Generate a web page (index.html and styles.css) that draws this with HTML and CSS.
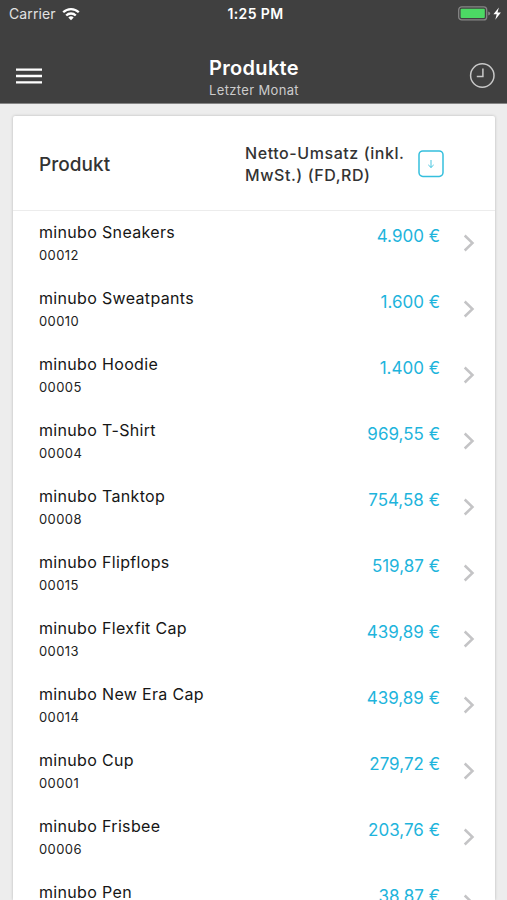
FILE: index.html
```html
<!DOCTYPE html>
<html lang="de">
<head>
<meta charset="utf-8">
<title>Produkte</title>
<link rel="stylesheet" href="styles.css">
</head>
<body>
<svg class="defs" width="0" height="0" aria-hidden="true">
  <symbol id="chevron" viewBox="0 0 12 18"><path d="M1.7 1.5 9.5 9 1.7 16.5" fill="none" stroke="#c4c4c6" stroke-width="2.5"/></symbol>
</svg>
<header class="topbar">
  <div class="status">
    <div class="carrier">
      <span>Carrier</span>
      <svg width="18" height="14" viewBox="0 0 18 14" fill="none" stroke="#fff" stroke-width="2.3"><path d="M1.2 5.3a11.1 11.1 0 0 1 15.6 0"/><path d="M4.2 8.5a6.8 6.8 0 0 1 9.6 0"/><path d="M9 13.2 6.3 10.5a3.8 3.8 0 0 1 5.4 0Z" fill="#fff" stroke="none"/></svg>
    </div>
    <span class="time">1:25 PM</span>
    <svg class="battery" width="44" height="16" viewBox="0 0 44 16"><rect x=".7" y=".9" width="28" height="13" rx="3" fill="none" stroke="#858585" stroke-width="1.3"/><rect x="2.6" y="2.8" width="24.2" height="9.2" rx="1" fill="#4cd964"/><path d="M30.2 5.4v4q2-.4 2-2t-2-2Z" fill="#858585"/><path d="M40.9 1.4 35.4 8.2h3.3l-1.4 5.6 5.6-7.2h-3.4Z" fill="#fff"/></svg>
  </div>
  <div class="nav">
    <svg width="26" height="18" viewBox="0 0 26 18" stroke="#fff" stroke-width="2.4"><path d="M0 2.6h26M0 9h26M0 15.4h26"/></svg>
    <div class="title"><h1>Produkte</h1><p>Letzter Monat</p></div>
    <svg width="26" height="26" viewBox="0 0 26 26" fill="none" stroke="#c8c8c8" stroke-width="1.5"><circle cx="13.3" cy="12.5" r="11.7"/><path d="M13.9 5.4v8H7.8"/></svg>
  </div>
</header>
<main class="card">
  <div class="head">
    <h2>Produkt</h2>
    <div class="metric">Netto-Umsatz (inkl.<br>MwSt.) (FD,RD)</div>
    <svg class="sort" width="26" height="28" viewBox="0 0 26 28" fill="none" stroke="#35bfdd"><rect x="1" y="1" width="24" height="25.4" rx="3.8" stroke-width="1.5"/><path d="M13 10v7.5M10.3 14.9l2.7 2.6 2.7-2.6" stroke-width=".9"/></svg>
  </div>
  <ul class="rows">
    <li><div class="product"><b>minubo Sneakers</b><small>00012</small></div><span class="price">4.900 €</span><svg class="chev"><use href="#chevron"/></svg></li>
    <li><div class="product"><b>minubo Sweatpants</b><small>00010</small></div><span class="price">1.600 €</span><svg class="chev"><use href="#chevron"/></svg></li>
    <li><div class="product"><b>minubo Hoodie</b><small>00005</small></div><span class="price">1.400 €</span><svg class="chev"><use href="#chevron"/></svg></li>
    <li><div class="product"><b>minubo T-Shirt</b><small>00004</small></div><span class="price">969,55 €</span><svg class="chev"><use href="#chevron"/></svg></li>
    <li><div class="product"><b>minubo Tanktop</b><small>00008</small></div><span class="price">754,58 €</span><svg class="chev"><use href="#chevron"/></svg></li>
    <li><div class="product"><b>minubo Flipflops</b><small>00015</small></div><span class="price">519,87 €</span><svg class="chev"><use href="#chevron"/></svg></li>
    <li><div class="product"><b>minubo Flexfit Cap</b><small>00013</small></div><span class="price">439,89 €</span><svg class="chev"><use href="#chevron"/></svg></li>
    <li><div class="product"><b>minubo New Era Cap</b><small>00014</small></div><span class="price">439,89 €</span><svg class="chev"><use href="#chevron"/></svg></li>
    <li><div class="product"><b>minubo Cup</b><small>00001</small></div><span class="price">279,72 €</span><svg class="chev"><use href="#chevron"/></svg></li>
    <li><div class="product"><b>minubo Frisbee</b><small>00006</small></div><span class="price">203,76 €</span><svg class="chev"><use href="#chevron"/></svg></li>
    <li><div class="product"><b>minubo Pen</b></div><span class="price">38,87 €</span><svg class="chev"><use href="#chevron"/></svg></li>
  </ul>
</main>
</body>
</html>
```
FILE: styles.css
```css
* { box-sizing: border-box; margin: 0; padding: 0; }
body {
  display: flex;
  flex-direction: column;
  height: 900px;
  overflow: hidden;
  background: #ededed;
  font-family: Inter, "Liberation Sans", sans-serif;
}
svg { display: block; flex: none; }
.defs { position: absolute; }
.topbar {
  flex: none;
  height: 104px;
  background: #404040;
  border-bottom: 1px solid #858585;
  color: #fff;
}
.status {
  display: grid;
  grid-template-columns: 1fr auto 1fr;
  align-items: center;
  height: 27px;
  padding: 0 5px 0 9px;
}
.carrier {
  display: flex;
  align-items: center;
  gap: 6px;
  font-size: 14px;
  line-height: 20px;
  letter-spacing: .1px;
  color: #e2e2e2;
}
.time { font-size: 14px; font-weight: 600; letter-spacing: .4px; }
.battery { justify-self: end; }
.nav {
  display: flex;
  align-items: center;
  justify-content: space-between;
  height: 50px;
  margin-top: 24px;
  padding: 0 12px 0 16px;
}
.title { text-align: center; padding: 3px 3px 0 0; }
.title h1 { font-size: 20px; font-weight: 600; line-height: 24px; letter-spacing: .3px; }
.title p { font-size: 13px; line-height: 20px; letter-spacing: .35px; color: #ccc; }
.card {
  flex: 1;
  min-height: 0;
  margin: 12px 12px 0 13px;
  background: #fff;
  border-radius: 2px 2px 0 0;
  box-shadow: 0 0 3px rgba(0, 0, 0, .24);
  overflow: hidden;
}
.head {
  display: flex;
  align-items: center;
  height: 95px;
  padding: 0 51px 0 26px;
  border-bottom: 1px solid #ececec;
  color: #333;
}
.head h2 { width: 206px; padding-top: 2px; font-size: 19px; font-weight: 500; letter-spacing: .05px; }
.metric { flex: 1; padding-top: 1px; font-size: 16px; font-weight: 500; line-height: 22px; letter-spacing: .57px; white-space: nowrap; }
.sort { margin-top: 1px; }
.rows { list-style: none; }
.rows li { display: flex; align-items: flex-start; height: 66px; padding: 9px 20px 0 26px; }
.product { flex: 1; }
.product b { display: block; font-size: 16px; font-weight: 400; line-height: 24px; letter-spacing: .33px; color: #161616; }
.product small { display: block; font-size: 13px; line-height: 22px; letter-spacing: .4px; color: #222; }
.price { margin-top: 4px; font-size: 17px; line-height: 24px; color: #1eb4dc; }
.chev { width: 12px; height: 18px; margin: 14px 0 0 23px; }
```
